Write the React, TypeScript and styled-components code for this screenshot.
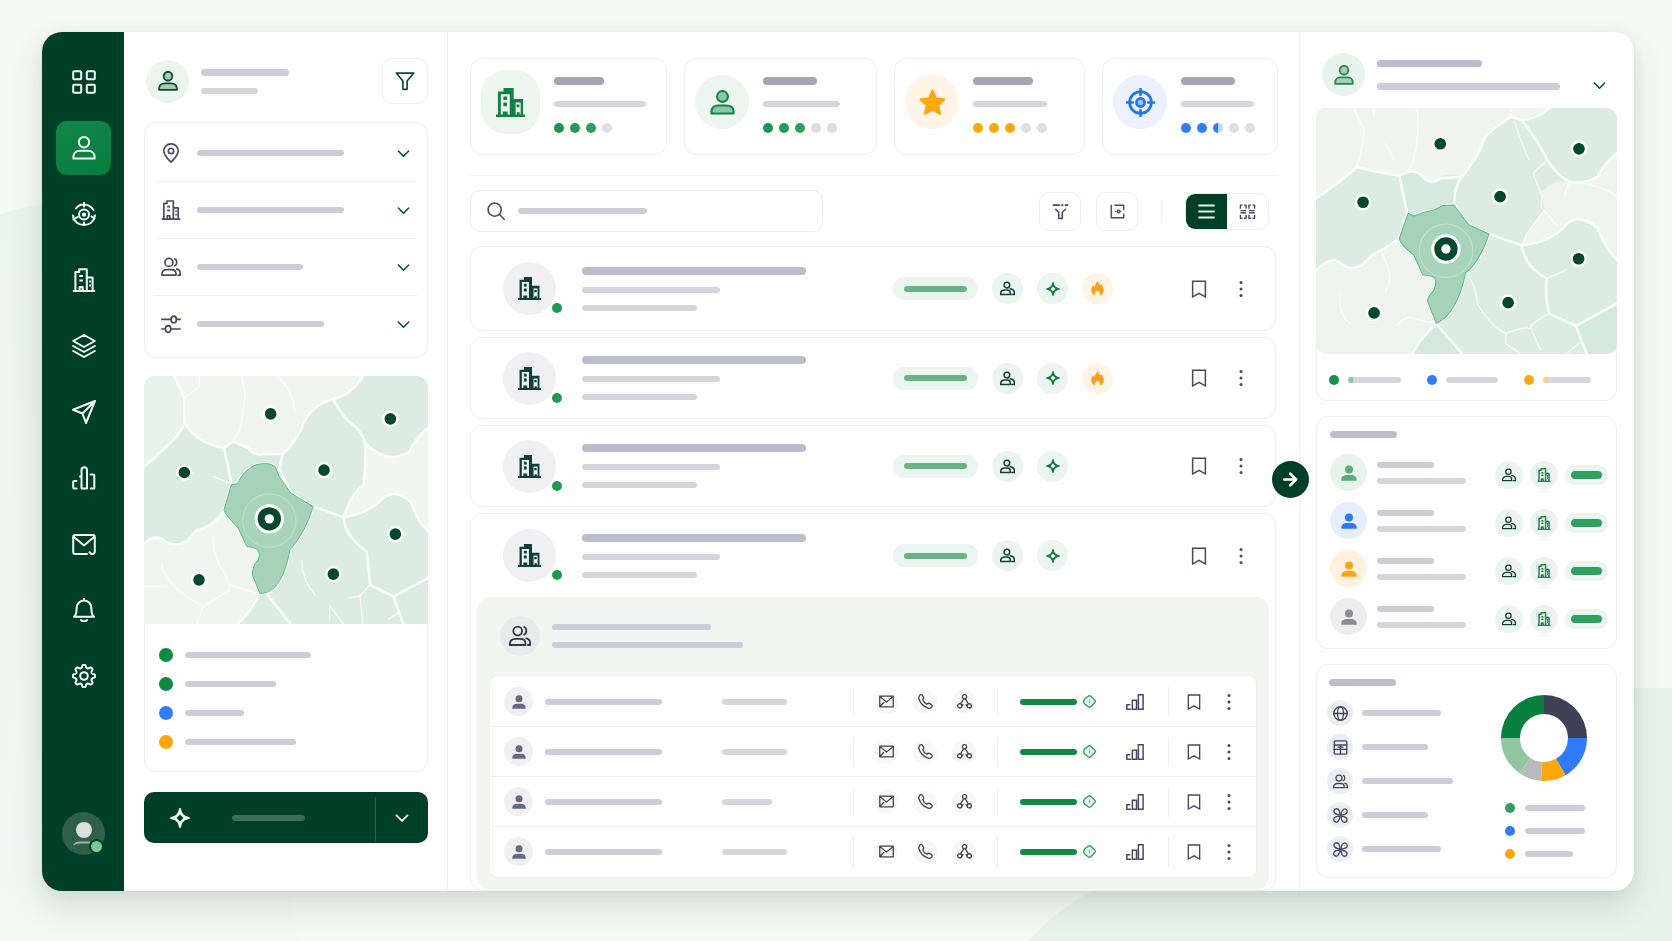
import React from "react";
import styled, { createGlobalStyle, css } from "styled-components";

const c = {
  forest: "#003f27",
  ink: "#0a4a33",
  green: "#0f8a45",
  mid: "#2fa05f",
  mint: "#ecf4ef",
  blue: "#2f7bfb",
  amber: "#fda70f",
  slate: "#4b4762",
  line: "#f0f1f2",
  barStrong: "#a3a4b5",
  barDark: "#bdbccc",
  bar: "#cdcdd9",
  barLight: "#d5d5de",
};

const GlobalStyle = createGlobalStyle`
  *, *::before, *::after { box-sizing: border-box; }
  body { margin: 0; background: #f6f8f6; font-family: Inter, "Liberation Sans", sans-serif; }
  button { appearance: none; border: 0; padding: 0; background: none; color: inherit; font: inherit; cursor: pointer; }
  ul { list-style: none; margin: 0; padding: 0; }
  svg { display: block; flex: none; }
`;

/* ---------- icons ---------- */

type IconProps = { size?: number; weight?: number; tone?: string; className?: string };

const Glyph = ({ size = 24, weight = 2, className, children }: IconProps & { children: React.ReactNode }) => (
  <svg
    className={className}
    width={size}
    height={size}
    viewBox="0 0 24 24"
    fill="none"
    stroke="currentColor"
    strokeWidth={weight}
    strokeLinecap="round"
    strokeLinejoin="round"
    aria-hidden="true"
  >
    {children}
  </svg>
);

const GridIcon = (p: IconProps) => (
  <Glyph {...p}>
    <rect x="1.2" y="1.2" width="8" height="8" rx="1" />
    <rect x="14.8" y="1.2" width="8" height="8" rx="1" />
    <rect x="1.2" y="14.8" width="8" height="8" rx="1" />
    <rect x="14.8" y="14.8" width="8" height="8" rx="1" />
  </Glyph>
);

const UserIcon = ({ tone = "none", ...p }: IconProps) => (
  <Glyph {...p}>
    <circle cx="12" cy="6.2" r="5.2" fill={tone} />
    <path d="M1.4 22.6v-1.8c0-3.6 2.8-6 6.6-6h8c3.8 0 6.6 2.4 6.6 6v1.8z" fill={tone} />
  </Glyph>
);

const SolidUserIcon = ({ size = 16 }: IconProps) => (
  <svg width={size} height={size} viewBox="0 0 24 24" fill="currentColor" aria-hidden="true">
    <circle cx="12" cy="6.6" r="6" />
    <path d="M0.5 23.5v-1.5c0-4.5 3.5-7 8-7h7c4.5 0 8 2.500 8 7v1.5z" />
  </svg>
);

const UsersIcon = (p: IconProps) => (
  <Glyph {...p}>
    <circle cx="9.5" cy="6.5" r="4.8" />
    <path d="M1 21.8v-1.3c0-3.2 2.5-5.300 5.700-5.300h6c3.200 0 5.300 2.100 5.300 5.300v1.300z" />
    <path d="M16.5 2.2c3.200 1.200 3.200 7 0 8.400M18.800 14.600c2.700.5 4.200 2.500 4.200 5v2.200h-2.400" />
  </Glyph>
);

const TeamIcon = (p: IconProps) => (
  <Glyph {...p}>
    <circle cx="11" cy="6.4" r="4.6" />
    <path d="M1 21.5v-1c0-4 3-6.300 7-6.300h3.500c3 0 5 2.300 5 5.300v2z" />
    <path d="M16.5 12.5c3.800.6 6.500 3.300 6.500 6.800v2.200h-4" />
  </Glyph>
);

const BuildingIcon = (p: IconProps) => (
  <Glyph {...p}>
    <path d="M0.8 23h22.400M3.400 23V4h3.800V1.200h7.600V23M14.800 9.500h5.800V23" strokeLinecap="butt" />
    <path d="M7.4 8h3.600M7.400 12.500h3.600M17.200 13.500h1.800M17.200 17.500h1.800" strokeLinecap="butt" />
    <path d="M7.6 22.5v-3.600h3v3.600" />
  </Glyph>
);

const TowerIcon = ({ size = 24 }: IconProps) => (
  <svg width={size} height={size} viewBox="0 0 24 24" fill="currentColor" fillRule="evenodd" aria-hidden="true">
    <path d="M0 24v-2h1.600V2.800h4.600V0h8.400v9h7.800v13H24v2zM4 5.200V22h1.600v-2.600h4V22h1.800V5.200zM16.200 12v10h1v-2h2.400v2h.8V12z" />
    <path d="M6.1 7h3v3h-3zM6.100 12h3v3h-3zM17 13.600h2.400V16H17z" />
  </svg>
);

const RadarIcon = (p: IconProps) => (
  <Glyph {...p}>
    <circle cx="12" cy="12.6" r="5" />
    <circle cx="12" cy="12.6" r="1.2" fill="currentColor" />
    <path d="M4 6.500C6 3.800 9 2.400 12 2.600c4 .1 7 2 9.500 5.400M1 13.500C1.500 19.500 6.500 23 12 23c5.500 0 10-3.500 11-9.500M12 0v4.500M12 20.500V24M1.400 17.500l4.100-2.500M22.500 16.500l-3-2" />
  </Glyph>
);

const LayersIcon = (p: IconProps) => (
  <Glyph {...p}>
    <path d="M12 1 22.800 7 12 13 1.200 7zM1.200 12 12 18l10.800-6M1.200 17 12 23l10.800-6" />
  </Glyph>
);

const SendIcon = (p: IconProps) => (
  <Glyph {...p}>
    <path d="M23 1 14 23l-3.500-9.500L1 9.800zM23 1 10.500 13.500" />
  </Glyph>
);

const ColumnsIcon = (p: IconProps) => (
  <Glyph {...p}>
    <path d="M4.5 15H2.200c-.7 0-1 .4-1 1v5.500c0 .6.400 1 1 1h2.300M8 10.500h1.500M9.500 22.500V4.200c0-4 5.500-4 5.500 0v18.300zM18.500 8.500h2.800c.6 0 1 .4 1 1v13h-3.500" />
  </Glyph>
);

const MailIcon = (p: IconProps) => (
  <Glyph {...p}>
    <path d="M15 22H3.200c-1.200 0-2-.8-2-2V5c0-1.200.8-2 2-2h17.600c1.200 0 2 .8 2 2v14.500c0 1.700-1.800 3-3.800 2.400l-1.500-1.600M2 5l10 8.500L22 5" />
  </Glyph>
);

const EnvelopeIcon = (p: IconProps) => (
  <Glyph {...p}>
    <path d="M1.2 3.500h21.600v17H1.200zM1.500 4l10.500 9L22.500 4M1.500 20l6-6.500" />
  </Glyph>
);

const BellIcon = (p: IconProps) => (
  <Glyph {...p}>
    <path d="M12 .8v1.500M2 18.800c2.200-1.700 2.600-3.800 2.600-8.300 0-4.800 3.100-8 7.400-8s7.400 3.200 7.400 8c0 4.500.4 6.600 2.600 8.300zM9 22c1 1.600 5 1.600 6 0" />
  </Glyph>
);

const gearPath = (() => {
  const pts: string[] = [];
  for (let i = 0; i < 160; i += 1) {
    const a = (i / 160) * Math.PI * 2;
    const wave = Math.tanh(1.8 * Math.cos(8 * a)) / Math.tanh(1.8);
    const r = 9.7 + 1.4 * wave;
    pts.push(`${(12 + r * Math.sin(a)).toFixed(2)} ${(12 - r * Math.cos(a)).toFixed(2)}`);
  }
  return `M${pts.join("L")}Z`;
})();

const GearIcon = (p: IconProps) => (
  <Glyph {...p}>
    <path d={gearPath} />
    <circle cx="12" cy="12" r="3.8" />
  </Glyph>
);

const FunnelIcon = (p: IconProps) => (
  <Glyph {...p}>
    <path d="M1.5 2.500h21l-8 9.500v10h-5V12z" />
  </Glyph>
);

const FunnelLinesIcon = (p: IconProps) => (
  <Glyph {...p}>
    <path d="M1 3h10M13 3h3M18 3h5M4.500 8.500l5 4.500v9h5v-9l5-4.500" strokeLinecap="butt" />
  </Glyph>
);

const ExportIcon = (p: IconProps) => (
  <Glyph {...p}>
    <path d="M2 1v21h20v-7M7 2h15v8M8 12h2M15.500 9.800h-2c-2.500 0-2.500 4.400 0 4.400h2M14 12h4" strokeLinecap="butt" />
  </Glyph>
);

const TilesIcon = (p: IconProps) => (
  <Glyph {...p}>
    <path
      d="M2 8V3h3M7 3h3v5M2 10.800h8M14 8V3h3M19 3h3v5M14 10.800h8M2 13.800h8M14 13.800h8M2 16.500v5h3M7 21.500h3v-5M14 16.500v5h3M19 21.500h3v-5"
      strokeLinecap="butt"
    />
  </Glyph>
);

const ListIcon = (p: IconProps) => (
  <Glyph {...p}>
    <path d="M1.5 3.500h21M1.500 12h21M1.500 20.500h21" />
  </Glyph>
);

const PinIcon = (p: IconProps) => (
  <Glyph {...p}>
    <path d="M12 23c-4.500-4.600-8.600-8.200-8.600-13.400C3.400 4.700 7.200 1 12 1s8.600 3.700 8.600 8.600C20.600 14.800 16.500 18.400 12 23z" />
    <circle cx="12" cy="9.5" r="3.2" />
  </Glyph>
);

const SlidersIcon = (p: IconProps) => (
  <Glyph {...p}>
    <path d="M1 6.500h10.500M18.500 6.500H23M1 18h4M12 18h11" />
    <ellipse cx="15.3" cy="6.5" rx="3.2" ry="4" />
    <ellipse cx="8.5" cy="18" rx="3.2" ry="4" />
  </Glyph>
);

const ChevronIcon = (p: IconProps) => (
  <Glyph {...p}>
    <path d="M2.5 7.500 12 17l9.500-9.500" />
  </Glyph>
);

const SearchIcon = (p: IconProps) => (
  <Glyph {...p}>
    <circle cx="10.2" cy="10.2" r="8.8" />
    <path d="M17 17l6 6" />
  </Glyph>
);

const StarIcon = (p: IconProps) => (
  <Glyph {...p}>
    <path d="M12 1.500l3.200 6.900 7.300.9-5.400 5.100 1.500 7.600L12 18.200l-6.600 3.800 1.500-7.600L1.500 9.300l7.300-.9z" fill="currentColor" />
  </Glyph>
);

const AimIcon = (p: IconProps) => (
  <Glyph {...p}>
    <circle cx="12" cy="12" r="9" />
    <circle cx="12" cy="12" r="3.4" fill="#9dc0fd" />
    <path d="M12 .8v4.800M12 18.400v4.800M.8 12h4.800M18.400 12h4.800" />
  </Glyph>
);

const SparkIcon = ({ size = 16 }: IconProps) => (
  <svg width={size} height={size} viewBox="0 0 24 24" fill="currentColor" fillRule="evenodd" aria-hidden="true">
    <path d="M12 0c.8 0 1.200.5 1.300 1.300.5 2.800 1.400 5 2.900 6.500s3.700 2.400 6.500 2.900c1.700.3 1.700 2.300 0 2.600-2.800.5-5 1.400-6.500 2.900s-2.400 3.700-2.900 6.500c-.3 1.700-2.300 1.700-2.600 0-.5-2.800-1.400-5-2.900-6.500s-3.700-2.400-6.500-2.900c-1.700-.3-1.700-2.300 0-2.600 2.800-.5 5-1.400 6.500-2.900s2.400-3.700 2.900-6.500C10.800.5 11.200 0 12 0zM12 7.800 7.800 12l4.200 4.200 4.200-4.200z" />
  </svg>
);

const FlameIcon = ({ size = 16 }: IconProps) => (
  <svg width={size} height={size} viewBox="0 0 24 24" fill="currentColor" aria-hidden="true">
    <path d="M8.5 23.500C4.500 22 2 18.800 2 14.800c0-3 1.400-5.700 3.500-7.900l2.200 2.600C8.400 6 10 2.500 12.800 0c.6 3 2 4.500 3.400 6.400l1.600-1.200c2.500 2.800 4.200 6 4.200 9.400 0 4.200-2.500 7.500-6.500 8.900.8-2.500.2-5.500-1.500-7.700l-1.500 2.300-1.800-3c-2.500 2.400-3.400 5.600-2.200 8.400z" />
  </svg>
);

const BookmarkIcon = (p: IconProps) => (
  <Glyph {...p}>
    <path d="M3.5 1.500h17v21L12 17.800 3.500 22.500z" strokeLinejoin="miter" />
  </Glyph>
);

const KebabIcon = ({ size = 18 }: IconProps) => (
  <svg width={size} height={size} viewBox="0 0 18 18" fill="currentColor" aria-hidden="true">
    <circle cx="9" cy="2.4" r="1.5" />
    <circle cx="9" cy="9" r="1.5" />
    <circle cx="9" cy="15.6" r="1.5" />
  </svg>
);

const PhoneIcon = (p: IconProps) => (
  <Glyph {...p}>
    <path d="M2 3.500C3.500.8 6 .5 7 2l2 3.600c.6 1.300-.2 2.500-1.400 3.400.9 3.200 3.300 5.900 6.600 7.400 1.300-1.600 2.700-2 4-1.300l3.400 2c1.800 1.200 1.400 3.400-.8 5-1.600 1.200-4 1-6.500-.2C8 19 3.600 14 1.700 8.500 1.200 6.600 1.200 5 2 3.500z" />
  </Glyph>
);

const NetworkIcon = (p: IconProps) => (
  <Glyph {...p}>
    <circle cx="12" cy="4.4" r="3.4" />
    <circle cx="4.4" cy="19" r="3.4" />
    <circle cx="19.6" cy="19" r="3.4" />
    <path d="M10.5 8 6 15.500M13.500 8 18 15.500M8 19l1.500-2M16 19l-1.500-2" />
  </Glyph>
);

const SignalIcon = (p: IconProps) => (
  <Glyph {...p}>
    <path d="M5 15.500H1.200v6H6M8.500 21.500V9.500h5.500v12zM16.500 4.500V2.200h6.300v19.300h-6.300V6" strokeLinejoin="miter" />
  </Glyph>
);

const GemIcon = (p: IconProps) => (
  <Glyph {...p}>
    <path d="M9.5 2.200 3 7.500c-2 2.500-2 6.500 0 9l6.500 5.300c1.500 1 3.500 1 5 0l7.500-8c1-1.200 1-2.600 0-3.800l-7.500-7.800c-1.500-1-3.500-1-5 0z" fill="#e4f4ea" />
    <path d="M12 9.500v5" strokeWidth="2" opacity="0.6" />
  </Glyph>
);

const ArrowIcon = (p: IconProps) => (
  <Glyph {...p}>
    <path d="M2 12h18M11.500 2.500l9.500 9.500-9.500 9.500" />
  </Glyph>
);

const GlobeIcon = (p: IconProps) => (
  <Glyph {...p}>
    <circle cx="12" cy="12" r="10.8" />
    <ellipse cx="12" cy="12" rx="4.8" ry="10.8" />
    <path d="M1.2 12h21.600" />
  </Glyph>
);

const SheetIcon = (p: IconProps) => (
  <Glyph {...p}>
    <rect x="2" y="1.5" width="20" height="21" rx="1.5" />
    <path d="M2 8h20M2 15h20M12 8v14.500M8 11.500h8" />
  </Glyph>
);

const CloverIcon = (p: IconProps) => (
  <Glyph {...p}>
    {[0, 90, 180, 270].map((turn) => (
      <path
        key={turn}
        d="M11 11.500C11.300 6 9.500 1.200 5.800 1.200 1.500 1.200 0 6 3.500 8.600c2 1.500 4 2.200 7.500 2.900z"
        transform={`rotate(${turn} 12 12)`}
      />
    ))}
  </Glyph>
);

/* ---------- shared parts ---------- */

const Bar = styled.span<{ $w: number; $h?: number; $tone?: string }>`
  display: block;
  flex: none;
  width: ${(p) => p.$w}px;
  max-width: 100%;
  height: ${(p) => p.$h ?? 6}px;
  border-radius: 4px;
  background: ${(p) => p.$tone ?? c.bar};
`;

const Dot = styled.span<{ $size?: number; $tone: string }>`
  display: block;
  flex: none;
  width: ${(p) => p.$size ?? 10}px;
  height: ${(p) => p.$size ?? 10}px;
  border-radius: 50%;
  background: ${(p) => p.$tone};
`;

const Disc = styled.span<{ $size: number; $bg?: string; $fg?: string }>`
  position: relative;
  display: grid;
  place-items: center;
  flex: none;
  width: ${(p) => p.$size}px;
  height: ${(p) => p.$size}px;
  border-radius: 50%;
  background: ${(p) => p.$bg ?? c.mint};
  color: ${(p) => p.$fg ?? c.ink};
`;

const Lines = styled.span<{ $gap: number }>`
  display: flex;
  flex-direction: column;
  gap: ${(p) => p.$gap}px;
  min-width: 0;
`;

const Card = styled.section`
  border: 1px solid ${c.line};
  border-radius: 12px;
  background: #fefefe;
`;

/* ---------- page frame ---------- */

const Page = styled.div`
  position: relative;
  min-height: 100vh;
  padding: 32px 38px 50px 42px;
`;

const Backdrop = styled.svg`
  position: absolute;
  inset: 0;
  width: 100%;
  height: 100%;
`;

const Window = styled.div`
  position: relative;
  display: grid;
  grid-template-columns: 82px 324px minmax(0, 1fr) 334px;
  min-height: calc(100vh - 82px);
  border-radius: 20px;
  background: #fefefe;
  box-shadow: 0 14px 32px rgba(20, 60, 40, 0.14), 0 2px 12px rgba(20, 60, 40, 0.05);
`;

/* ---------- sidebar ---------- */

const Rail = styled.nav`
  display: flex;
  flex-direction: column;
  align-items: center;
  padding: 23px 0 36px 1px;
  border-radius: 20px 0 0 20px;
  background: ${c.forest};
  color: #f2fbf5;
`;

const RailList = styled.ul`
  display: flex;
  flex-direction: column;
  gap: 12px;
`;

const RailButton = styled.button<{ $active?: boolean }>`
  display: grid;
  place-items: center;
  width: 55px;
  height: 54px;
  border-radius: 11px;
  ${(p) =>
    p.$active &&
    css`
      background: linear-gradient(160deg, #108546, #0a7d40);
    `}
`;

const Profile = styled.button`
  position: relative;
  display: grid;
  place-items: center;
  width: 43px;
  height: 43px;
  margin-top: auto;
  border-radius: 50%;
  background: #2f6049;
`;

const Presence = styled.span`
  position: absolute;
  right: 1px;
  bottom: 1px;
  width: 15px;
  height: 15px;
  border: 2px solid ${c.forest};
  border-radius: 50%;
  background: #76cb93;
`;

const ProfileArt = () => (
  <svg width="24" height="24" viewBox="0 0 24 24" aria-hidden="true">
    <circle cx="12" cy="8" r="8" fill="#dcdfdd" />
    <path d="M1 23.500C2 20 6 19.500 9 19.500h9v2H9c-3 0-5 .5-8 2z" fill="#9db5a8" />
  </svg>
);

const railItems = [
  { label: "Dashboard", icon: GridIcon },
  { label: "Contacts", icon: UserIcon },
  { label: "Tracking", icon: RadarIcon },
  { label: "Companies", icon: BuildingIcon },
  { label: "Segments", icon: LayersIcon },
  { label: "Campaigns", icon: SendIcon },
  { label: "Reports", icon: ColumnsIcon },
  { label: "Mail", icon: MailIcon },
  { label: "Notifications", icon: BellIcon },
  { label: "Settings", icon: GearIcon },
];

const Sidebar = () => (
  <Rail aria-label="Main">
    <RailList>
      {railItems.map(({ label, icon: Icon }, i) => (
        <li key={label}>
          <RailButton type="button" aria-label={label} $active={i === 1}>
            <Icon size={24} weight={2} />
          </RailButton>
        </li>
      ))}
    </RailList>
    <Profile type="button" aria-label="Profile">
      <ProfileArt />
      <Presence />
    </Profile>
  </Rail>
);

/* ---------- maps ---------- */

type MapData = {
  viewBox: string;
  base: string;
  fills: { d: string; tone: string }[];
  roads: string[];
  lanes: string[];
  focus: string;
  centre: [number, number];
  pins: [number, number][];
};

const MapArt = styled.svg<{ $h: number; $flat?: boolean }>`
  width: 100%;
  height: ${(p) => p.$h}px;
  border-radius: ${(p) => (p.$flat ? "12px 12px 0 0" : "10px")};
`;

const TerritoryMap = ({ data, height, flat }: { data: MapData; height: number; flat?: boolean }) => (
  <MapArt
    $h={height}
    $flat={flat}
    viewBox={data.viewBox}
    preserveAspectRatio="xMidYMid slice"
    role="img"
    aria-label="Territory map"
  >
    <rect x="0" y="0" width="1400" height="1100" fill={data.base} />
    {data.fills.map((f) => (
      <path key={f.d} d={f.d} fill={f.tone} />
    ))}
    <g fill="none" stroke="#fdfefd" strokeLinecap="round" strokeLinejoin="round">
      {data.lanes.map((d) => (
        <path key={d} d={d} strokeWidth="4" opacity="0.75" />
      ))}
      {data.roads.map((d) => (
        <path key={d} d={d} strokeWidth="7" />
      ))}
    </g>
    <path d={data.focus} fill="#a6d3b8" stroke="#fdfefd" strokeWidth="8" strokeLinejoin="round" />
    <path d={data.focus} fill="#a6d3b8" stroke="#5cb98a" strokeWidth="3" strokeLinejoin="round" />
    <circle cx={data.centre[0]} cy={data.centre[1] + 5} r="80" fill="#b7dcc6" fillOpacity="0.15" stroke="#c4e2d0" strokeWidth="3" />
    <circle cx={data.centre[0]} cy={data.centre[1]} r="44" fill="#fff" />
    <circle cx={data.centre[0]} cy={data.centre[1]} r="35" fill="#04482e" />
    <circle cx={data.centre[0]} cy={data.centre[1]} r="14" fill="#fff" />
    {data.pins.map(([x, y]) => (
      <circle key={`${x}-${y}`} cx={x} cy={y} r="21" fill="#04482e" stroke="#fff" strokeWidth="7" />
    ))}
  </MapArt>
);

const overviewMap: MapData = {
  viewBox: "432 48 852 745",
  base: "#dcece3",
  fills: [
    { d: "M432 48H523L553 115V190Q540 220 522 238Q470 290 432 320Z", tone: "#e8f2ec" },
    { d: "M523 48L553 115V190Q590 250 672 265L700 245L745 265Q765 290 790 283L848 283Q885 250 905 205Q930 135 1000 118Q1050 108 1090 48Z", tone: "#f0f5f2" },
    { d: "M1095 250Q1140 292 1180 292L1225 280Q1250 230 1284 205V515Q1255 470 1235 430Q1190 385 1150 415Q1110 455 1030 472L1050 425Q1085 385 1090 370Z", tone: "#f1f6f3" },
    { d: "M432 550Q470 520 490 540Q520 565 560 545L585 515Q640 500 672 460L715 500L740 560L778 568L775 600L755 625L780 702Q740 760 712 793H432Z", tone: "#f0f5f2" },
    { d: "M672 265L700 245L745 265Q765 290 790 283H848L835 325L765 315L694 372Z", tone: "#d9ebe1" },
  ],
  roads: [
    "M523 48L553 115V190Q540 220 522 238Q470 290 432 320",
    "M553 190Q590 250 672 265Q685 320 694 372L672 455Q640 500 585 515L560 545Q520 565 490 540Q465 522 432 550",
    "M672 265L700 245L745 265Q765 290 790 283H848Q885 250 905 205Q930 135 1000 118Q1050 108 1090 48",
    "M1000 118Q1025 170 1065 200Q1090 225 1095 250Q1140 292 1180 292L1225 280Q1250 230 1284 205",
    "M1095 250Q1100 290 1090 375Q1060 400 1050 425L1030 472Q1100 465 1150 415Q1190 385 1235 430Q1250 480 1284 515",
    "M848 283L838 325L872 400L940 440L1030 472Q1035 530 1100 575L1110 675L1180 710L1284 655",
    "M1180 710L1210 793M780 702Q745 765 712 793M800 702L830 740L872 793",
    "M940 440Q915 520 870 570Q850 680 800 702",
  ],
  lanes: [
    "M553 115L598 80V48M725 48L735 100Q730 200 700 245M830 48Q880 90 885 160",
    "M1110 675L1080 708L1088 793M1080 708L1045 715M905 600Q905 660 945 705M990 738L1030 793M1165 778L1195 760",
    "M640 350L694 372M640 530Q635 590 680 650L690 690L610 740L590 793M485 610Q490 660 560 710L610 740M432 680L500 680",
    "M690 675L770 700M990 738L988 780",
  ],
  focus: "M712 372Q735 325 768 315Q805 305 825 320L838 350L872 400L940 440Q915 520 870 570Q850 680 800 698L780 702L757 645Q757 615 775 600Q785 570 760 563L740 560L715 505Q675 465 672 450L694 375Z",
  centre: [808, 477],
  pins: [[812, 162], [1171, 177], [553, 338], [972, 331], [1186, 523], [1000, 643], [597, 660]],
};

const accountMap: MapData = {
  viewBox: "77 235 901 736",
  base: "#dcece3",
  fills: [
    { d: "M77 235H775Q740 270 660 262Q600 300 582 325Q550 390 515 440Q470 420 420 458Q390 425 330 438L198 412Q120 480 77 505Z", tone: "#f0f5f2" },
    { d: "M835 455Q880 465 920 440Q940 400 978 370V690Q940 650 920 595Q870 550 830 580Q780 640 692 645L708 610L760 540L755 485Q780 450 835 455Z", tone: "#f0f4f1" },
    { d: "M77 720Q120 680 145 695Q175 725 215 705Q250 665 270 662L325 625L370 675L397 735L437 742V770L412 805L437 880Q385 930 365 971H77Z", tone: "#edf3ef" },
    { d: "M327 438Q365 415 390 433Q415 470 450 445Q475 445 515 440Q490 465 492 525L370 553L350 550Z", tone: "#d6e9df" },
    { d: "M855 887L978 820V971H887Z", tone: "#d5e8de" },
    { d: "M437 880L515 971H365Q385 930 437 880Z", tone: "#d5e8de" },
  ],
  roads: [
    "M77 505Q160 450 198 412Q250 425 327 438L350 550L327 625Q290 650 270 662Q245 670 215 705Q175 725 145 695Q120 680 77 720",
    "M327 438Q365 415 390 433Q415 470 450 445Q475 445 515 440Q560 385 582 325Q600 300 660 262L690 270Q740 270 775 235",
    "M515 440Q488 470 492 525L535 585L595 612L692 645Q780 640 830 580Q870 550 920 595Q940 650 978 690",
    "M690 270Q720 300 770 390Q800 440 835 455Q880 465 920 440Q940 400 978 370",
    "M692 645Q705 715 768 745Q760 790 775 850L855 887L978 820M855 887L887 971",
    "M595 612Q565 700 525 728Q500 850 437 880Q385 930 365 971M437 880L515 971",
  ],
  lanes: [
    "M380 235Q390 350 355 425M190 235L220 300Q215 370 198 412M250 235V262M285 340L310 390M660 240V262",
    "M672 275Q690 340 715 390M770 390L727 430Q745 480 755 500L750 530L800 590M760 540L708 610L697 640M835 455L822 495M840 455Q930 465 978 500",
    "M535 740Q560 780 560 820Q600 890 645 910V940L690 971M645 910Q690 890 720 895Q715 880 775 850M720 895L750 960M825 971L870 935M770 745L825 720",
    "M270 662Q305 720 295 760L285 785M320 885Q350 850 380 868L437 880M150 790Q140 850 180 880",
  ],
  focus: "M353 550L370 558Q400 545 430 540L455 527L490 525L535 585L595 612Q565 700 525 728Q500 850 437 880L411 812Q411 800 430 780Q445 742 420 738L397 735L370 675Q335 650 326 627Z",
  centre: [466, 657],
  pins: [[449, 342], [864, 357], [218, 517], [628, 500], [863, 686], [652, 817], [251, 848]],
};

/* ---------- left panel ---------- */

const FilterPanel = styled.aside`
  display: flex;
  flex-direction: column;
  gap: 18px;
  padding: 26px 19px 48px 20px;
  border-right: 1px solid ${c.line};
`;

const PanelHead = styled.header`
  display: flex;
  align-items: center;
  gap: 12px;
  height: 46px;
  padding-left: 2px;
`;

const SquareButton = styled.button<{ $w: number; $h: number }>`
  display: grid;
  place-items: center;
  flex: none;
  width: ${(p) => p.$w}px;
  height: ${(p) => p.$h}px;
  border: 1px solid #efeff1;
  border-radius: 10px;
  color: ${c.slate};
`;

const HeadFilter = styled(SquareButton)`
  margin-left: auto;
  color: ${c.ink};
`;

const FilterCard = styled(Card)`
  padding: 2px 10px 4px;
`;

const FilterRow = styled.li`
  border-bottom: 1px solid ${c.line};
  &:last-child {
    border-bottom-color: transparent;
  }
`;

const FilterButton = styled.button`
  display: flex;
  align-items: center;
  gap: 16px;
  width: 100%;
  height: 56px;
  padding: 0 7px 0 6px;
  color: ${c.slate};
`;

const TrailingChevron = styled(ChevronIcon)`
  margin-left: auto;
  color: ${c.ink};
`;

const MapCard = styled.section`
  border-radius: 12px;
  box-shadow: inset 0 0 0 1px ${c.line};
`;

const MapLegend = styled.ul`
  display: flex;
  flex-direction: column;
  gap: 15px;
  padding: 24px 15px 23px;
`;

const LegendItem = styled.li<{ $gap: number }>`
  display: flex;
  align-items: center;
  gap: ${(p) => p.$gap}px;
`;

const SplitButton = styled.div`
  display: flex;
  height: 51px;
  margin-top: auto;
  padding: 5px 0 2px;
  border-radius: 10px;
  background: ${c.forest};
  color: #f4fbf6;
`;

const SplitMain = styled.button`
  display: flex;
  align-items: center;
  gap: 42px;
  flex: 1;
  padding: 0 0 3px 26px;
`;

const SplitMore = styled.button`
  display: grid;
  place-items: center;
  width: 53px;
  padding-bottom: 3px;
  border-left: 1px solid #2f614b;
`;

const filters = [
  { label: "Location", icon: PinIcon, w: 147 },
  { label: "Company", icon: BuildingIcon, w: 147 },
  { label: "Team", icon: UsersIcon, w: 106 },
  { label: "Attributes", icon: SlidersIcon, w: 127 },
];

const LeftPanel = () => (
  <FilterPanel aria-label="Filters">
    <PanelHead>
      <Disc $size={43}>
        <UserIcon size={20} weight={2.2} tone="#a3ccb6" />
      </Disc>
      <Lines $gap={12}>
        <Bar $w={88} $h={7} />
        <Bar $w={57} $tone={c.barLight} />
      </Lines>
      <HeadFilter type="button" aria-label="Filter" $w={46} $h={46}>
        <FunnelIcon size={20} weight={2} />
      </HeadFilter>
    </PanelHead>
    <FilterCard>
      <ul>
        {filters.map(({ label, icon: Icon, w }) => (
          <FilterRow key={label}>
            <FilterButton type="button" aria-label={label} aria-expanded={false}>
              <Icon size={20} weight={2} />
              <Bar $w={w} />
              <TrailingChevron size={13} weight={2.8} />
            </FilterButton>
          </FilterRow>
        ))}
      </ul>
    </FilterCard>
    <MapCard>
      <TerritoryMap data={overviewMap} height={248} flat />
      <MapLegend>
        {[
          [c.green, 126],
          [c.green, 91],
          [c.blue, 59],
          [c.amber, 111],
        ].map(([tone, w]) => (
          <LegendItem key={`${tone}-${w}`} $gap={12}>
            <Dot $size={14} $tone={String(tone)} />
            <Bar $w={Number(w)} />
          </LegendItem>
        ))}
      </MapLegend>
    </MapCard>
    <SplitButton>
      <SplitMain type="button" aria-label="Create">
        <SparkIcon size={20} />
        <Bar $w={73} $tone="#3b6f56" />
      </SplitMain>
      <SplitMore type="button" aria-label="More create options">
        <ChevronIcon size={14} weight={3} />
      </SplitMore>
    </SplitButton>
  </FilterPanel>
);

/* ---------- centre ---------- */

const Main = styled.main`
  min-width: 0;
  padding: 26px 21px 0 22px;
  border-right: 1px solid ${c.line};
`;

const Stats = styled.div`
  display: grid;
  grid-template-columns: 197fr 193fr 191fr 176fr;
  gap: 17px;
  padding-bottom: 20px;
  border-bottom: 1px solid #f3f4f4;
`;

const StatCard = styled(Card)`
  display: flex;
  align-items: center;
  gap: 14px;
  height: 97px;
  padding: 0 0 9px 10px;
`;

const StatBadge = styled(Disc)<{ $wide?: boolean }>`
  ${(p) =>
    p.$wide &&
    css`
      width: 59px;
      height: 64px;
      border-radius: 25px;
    `}
`;

const StatText = styled.div`
  display: flex;
  flex-direction: column;
  gap: 16px;
  padding-top: 5px;
`;

const Rating = styled.div`
  display: flex;
  gap: 6px;
`;

const off = "#dfdfe1";
const stats = [
  { icon: <TowerIcon size={29} />, bg: "#edf5f0", fg: "#128044", wide: true, top: 50, sub: 92, dots: ["#1b9450", "#239a56", "#309d60", off] },
  { icon: <UserIcon size={25} weight={2} tone="#8cc7a3" />, bg: "#edf5f0", fg: "#158347", top: 54, sub: 77, dots: ["#1b9450", "#239a56", "#309d60", off, off] },
  { icon: <StarIcon size={27} />, bg: "#fff4e5", fg: c.amber, top: 60, sub: 74, dots: [c.amber, c.amber, c.amber, off, off] },
  {
    icon: <AimIcon size={29} weight={2.2} />,
    bg: "#ebf1fe",
    fg: "#2273f0",
    top: 54,
    sub: 73,
    dots: [c.blue, c.blue, `linear-gradient(90deg, ${c.blue} 50%, #bfd5fb 50%)`, off, off],
  },
];

const Toolbar = styled.div`
  display: flex;
  align-items: center;
  height: 42px;
  margin: 14px 0;
  padding-right: 9px;
`;

const SearchField = styled.label`
  display: flex;
  align-items: center;
  gap: 13px;
  flex: 0 1 353px;
  min-width: 0;
  height: 42px;
  padding: 0 16px;
  border: 1px solid #ebecee;
  border-radius: 10px;
  color: #4a4a50;
`;

const SearchInput = styled.input`
  flex: 1;
  min-width: 0;
  border: 0;
  outline: 0;
  background: none;
  font: 14px/20px Inter, "Liberation Sans", sans-serif;
`;

const Tools = styled.div`
  display: flex;
  align-items: center;
  gap: 15px;
  margin-left: auto;
`;

const Separator = styled.span`
  display: block;
  flex: none;
  width: 1px;
  height: 22px;
  margin: 0 8px;
  background: #ecedef;
`;

const ViewToggle = styled.div`
  display: flex;
  height: 37px;
  border: 1px solid #efeff1;
  border-radius: 10px;
  overflow: hidden;
`;

const ToggleSide = styled.button<{ $active?: boolean }>`
  display: grid;
  place-items: center;
  width: 41px;
  color: ${(p) => (p.$active ? "#e8f6ee" : c.slate)};
  background: ${(p) => (p.$active ? c.forest : "transparent")};
`;

const Results = styled.div`
  display: flex;
  flex-direction: column;
  gap: 6px;
  padding-right: 2px;
`;

const Result = styled.article`
  border: 1px solid #eeefef;
  border-radius: 12px;
`;

const ResultRow = styled.div<{ $h: number }>`
  display: grid;
  grid-template-columns: 53px minmax(0, 1fr) 271px auto;
  column-gap: 26px;
  align-items: center;
  height: ${(p) => p.$h}px;
  padding: 0 25px 0 32px;
`;

const StatusDot = styled(Dot)`
  position: absolute;
  right: -6px;
  bottom: 2px;
`;

const Chips = styled.div`
  display: flex;
  align-items: center;
  gap: 14px;
`;

const Tag = styled.span<{ $w: number; $h: number }>`
  display: grid;
  place-items: center;
  flex: none;
  width: ${(p) => p.$w}px;
  height: ${(p) => p.$h}px;
  border-radius: 12px;
  background: ${c.mint};
`;

const Actions = styled.div`
  display: flex;
  align-items: center;
  gap: 24px;
  color: ${c.slate};
`;

const IconButton = styled.button`
  display: grid;
  place-items: center;
`;

const Expanded = styled.div`
  margin: 0 6px;
  padding: 19px 12px 12px;
  border-radius: 14px;
  background: #f1f6f3;
`;

const ExpandedHead = styled.header`
  display: flex;
  align-items: center;
  gap: 12px;
  padding: 0 11px 19px;
`;

const TableFrame = styled.div`
  padding-top: 1px;
  border: 1px solid #eef1f0;
  border-radius: 9px;
  background: #fefefe;
`;

const People = styled.table`
  width: 100%;
  table-layout: fixed;
  border-spacing: 0;

  td {
    height: 50px;
    padding: 0;
    border-bottom: 1px solid #f0f1f2;
  }
  tr:last-child td {
    border-bottom-color: transparent;
  }
`;

const Cell = styled.div<{ $gap: number; $pad: number; $ruled?: boolean }>`
  display: flex;
  align-items: center;
  gap: ${(p) => p.$gap}px;
  height: 30px;
  padding-left: ${(p) => p.$pad}px;
  color: ${c.slate};
  ${(p) =>
    p.$ruled &&
    css`
      border-left: 1px solid #f0f0f2;
    `}
`;

const Gem = styled.span`
  color: #2c9f5c;
  margin-right: 24px;
`;

const Company = ({ hot, tall, children }: { hot?: boolean; tall?: boolean; children?: React.ReactNode }) => (
  <Result>
    <ResultRow $h={tall ? 83 : 80}>
      <Disc $size={53} $bg="#f0f0f2" $fg="#0c3f3b">
        <TowerIcon size={23} />
        <StatusDot $tone="#1f9a53" />
      </Disc>
      <Lines $gap={12}>
        <Bar $w={224} $h={8} $tone={c.barDark} />
        <Bar $w={138} $tone={c.barLight} />
        <Bar $w={115} $tone={c.barLight} />
      </Lines>
      <Chips>
        <Tag $w={85} $h={23}>
          <Bar $w={63} $tone="#69b387" />
        </Tag>
        <Disc $size={31} $fg="#123c38">
          <TeamIcon size={15} weight={2.4} />
        </Disc>
        <Disc $size={31} $fg="#12793f">
          <SparkIcon size={14} />
        </Disc>
        {hot && (
          <Disc $size={31} $bg="#fff4e5" $fg="#fb9f1c">
            <FlameIcon size={15} />
          </Disc>
        )}
      </Chips>
      <Actions>
        <IconButton type="button" aria-label="Bookmark company">
          <BookmarkIcon size={18} weight={2} />
        </IconButton>
        <IconButton type="button" aria-label="Company menu">
          <KebabIcon size={18} />
        </IconButton>
      </Actions>
    </ResultRow>
    {children}
  </Result>
);

const Centre = () => (
  <Main>
    <Stats>
      {stats.map((s, i) => (
        <StatCard key={i}>
          <StatBadge $size={54} $bg={s.bg} $fg={s.fg} $wide={s.wide}>
            {s.icon}
          </StatBadge>
          <StatText>
            <Bar $w={s.top} $h={8} $tone={c.barStrong} />
            <Bar $w={s.sub} $tone={c.barLight} />
            <Rating>
              {s.dots.map((tone, k) => (
                <Dot key={k} $tone={tone} />
              ))}
            </Rating>
          </StatText>
        </StatCard>
      ))}
    </Stats>
    <Toolbar>
      <SearchField>
        <SearchIcon size={18} weight={2} />
        <Bar $w={129} />
        <SearchInput type="search" aria-label="Search companies" />
      </SearchField>
      <Tools>
        <SquareButton type="button" aria-label="Filter results" $w={42} $h={39}>
          <FunnelLinesIcon size={17} weight={2.2} />
        </SquareButton>
        <SquareButton type="button" aria-label="Export results" $w={42} $h={39}>
          <ExportIcon size={15} weight={2.2} />
        </SquareButton>
        <Separator />
        <ViewToggle>
          <ToggleSide type="button" aria-label="List view" aria-pressed $active>
            <ListIcon size={17} weight={2.6} />
          </ToggleSide>
          <ToggleSide type="button" aria-label="Grid view" aria-pressed={false}>
            <TilesIcon size={17} weight={2} />
          </ToggleSide>
        </ViewToggle>
      </Tools>
    </Toolbar>
    <Results>
      <Company hot tall />
      <Company hot />
      <Company />
      <Company tall>
        <Expanded>
          <ExpandedHead>
            <Disc $size={40} $bg="#e8ebeb" $fg="#353645">
              <UsersIcon size={22} weight={2} />
            </Disc>
            <Lines $gap={12}>
              <Bar $w={159} />
              <Bar $w={191} />
            </Lines>
          </ExpandedHead>
          <TableFrame>
            <People aria-label="People">
              <colgroup>
                <col />
                <col width="131" />
                <col width="144" />
                <col width="171" />
                <col width="88" />
              </colgroup>
              <tbody>
                {[65, 65, 50, 65].map((w, i) => (
                  <tr key={i}>
                    <td>
                      <Cell $gap={12} $pad={14}>
                        <Disc $size={29} $bg="#f0f0f2" $fg="#666880">
                          <SolidUserIcon size={14} />
                        </Disc>
                        <Bar $w={117} />
                      </Cell>
                    </td>
                    <td>
                      <Cell $gap={0} $pad={0}>
                        <Bar $w={w} $tone={c.barLight} />
                      </Cell>
                    </td>
                    <td>
                      <Cell $gap={15} $pad={20} $ruled>
                        {[EnvelopeIcon, PhoneIcon, NetworkIcon].map((Icon, k) => (
                          <IconButton key={k} type="button" aria-label={["Email", "Call", "Relations"][k]}>
                            <Disc $size={24} $bg="#f8f8f9" $fg="#44434f">
                              <Icon size={15} weight={2.1} />
                            </Disc>
                          </IconButton>
                        ))}
                      </Cell>
                    </td>
                    <td>
                      <Cell $gap={6} $pad={22} $ruled>
                        <Bar $w={57} $tone={c.green} />
                        <Gem>
                          <GemIcon size={13} weight={2.4} />
                        </Gem>
                        <SignalIcon size={18} weight={2} />
                      </Cell>
                    </td>
                    <td>
                      <Cell $gap={18} $pad={17} $ruled>
                        <IconButton type="button" aria-label="Bookmark person">
                          <BookmarkIcon size={16} weight={2} />
                        </IconButton>
                        <IconButton type="button" aria-label="Person menu">
                          <KebabIcon size={18} />
                        </IconButton>
                      </Cell>
                    </td>
                  </tr>
                ))}
              </tbody>
            </People>
          </TableFrame>
        </Expanded>
      </Company>
    </Results>
  </Main>
);

/* ---------- right panel ---------- */

const DetailPanel = styled.aside`
  position: relative;
  display: flex;
  flex-direction: column;
  gap: 15px;
  padding: 21px 17px 13px 16px;
`;

const Collapse = styled.button`
  position: absolute;
  top: 429px;
  left: -28px;
  display: grid;
  place-items: center;
  width: 37px;
  height: 37px;
  border-radius: 50%;
  background: ${c.forest};
  color: #fff;
`;

const AccountBlock = styled.section`
  display: flex;
  flex-direction: column;
  gap: 12px;
`;

const AccountHead = styled.header`
  display: flex;
  align-items: center;
  gap: 12px;
  height: 43px;
  padding: 0 11px 0 6px;
`;

const AccountMore = styled.button`
  align-self: flex-end;
  margin: 0 0 4px auto;
  color: ${c.ink};
`;

const MapKey = styled.ul`
  display: grid;
  grid-template-columns: 98px 97px 1fr;
  align-items: center;
  height: 47px;
  padding: 4px 0 0 13px;
`;

const PeopleCard = styled(Card)`
  padding: 14px 8px 13px 13px;
`;

const Owners = styled.ul`
  display: flex;
  flex-direction: column;
  gap: 11px;
  padding-top: 16px;
`;

const Owner = styled.li`
  display: flex;
  align-items: center;
  gap: 10px;
  height: 37px;
`;

const OwnerMeta = styled.div`
  display: flex;
  align-items: center;
  gap: 7px;
  margin-left: auto;
  padding-top: 4px;
`;

const SourceCard = styled(Card)`
  display: flex;
  justify-content: space-between;
  flex: 1;
  padding: 14px 29px 12px 10px;
`;

const SourceList = styled.ul`
  display: flex;
  flex-direction: column;
  gap: 8px;
  padding-top: 14px;
`;

const TitleBar = styled(Bar)`
  margin-left: 2px;
`;

const ChartSide = styled.div`
  display: flex;
  flex-direction: column;
  align-items: center;
  gap: 22px;
  padding-top: 16px;
`;

const ChartKey = styled.ul`
  display: flex;
  flex-direction: column;
  gap: 13px;
  width: 78px;
`;

const segments = [
  { from: 0, to: 90, tone: "#3e4256" },
  { from: 90, to: 150, tone: "#2f7bfb" },
  { from: 150, to: 184, tone: "#fda70f" },
  { from: 184, to: 215, tone: "#b9bbba" },
  { from: 215, to: 270, tone: "#92c5a1" },
  { from: 270, to: 360, tone: "#08803d" },
];

const arc = (from: number, to: number) => {
  const at = (deg: number, r: number) => {
    const a = (deg * Math.PI) / 180;
    return `${(43 + r * Math.sin(a)).toFixed(2)} ${(43 - r * Math.cos(a)).toFixed(2)}`;
  };
  return `M${at(from, 43)}A43 43 0 0 1 ${at(to, 43)}L${at(to, 24)}A24 24 0 0 0 ${at(from, 24)}Z`;
};

const Donut = () => (
  <svg width="86" height="86" viewBox="0 0 86 86" role="img" aria-label="Source breakdown">
    {segments.map((s) => (
      <path key={s.from} d={arc(s.from, s.to)} fill={s.tone} />
    ))}
  </svg>
);

const owners = [
  { bg: "#e8f3ec", fg: "#55ad7c" },
  { bg: "#e6edfe", fg: "#2b78f8" },
  { bg: "#fff1de", fg: "#fda412" },
  { bg: "#ededf0", fg: "#8b8b99" },
];

const sources = [
  { icon: GlobeIcon, w: 79 },
  { icon: SheetIcon, w: 66 },
  { icon: UsersIcon, w: 91 },
  { icon: CloverIcon, w: 66 },
  { icon: CloverIcon, w: 79 },
];

const RightPanel = () => (
  <DetailPanel aria-label="Account details">
    <AccountBlock>
      <AccountHead>
        <Disc $size={43} $bg="#e8f3ed" $fg="#27895a">
          <UserIcon size={20} weight={2.2} tone="#a0d2b3" />
        </Disc>
        <Lines $gap={16}>
          <Bar $w={105} $h={7} $tone={c.barDark} />
          <Bar $w={183} $h={7} />
        </Lines>
        <AccountMore type="button" aria-label="Switch account">
          <ChevronIcon size={13} weight={2.8} />
        </AccountMore>
      </AccountHead>
      <MapCard>
        <TerritoryMap data={accountMap} height={246} />
        <MapKey>
          <LegendItem $gap={9}>
            <Dot $tone="#1d8c4b" />
            <Bar $w={53} $tone={`linear-gradient(90deg, #8cc7a3 5px, ${c.barLight} 5px)`} />
          </LegendItem>
          <LegendItem $gap={9}>
            <Dot $tone={c.blue} />
            <Bar $w={52} $tone={c.barLight} />
          </LegendItem>
          <LegendItem $gap={9}>
            <Dot $tone={c.amber} />
            <Bar $w={48} $tone={`linear-gradient(90deg, #fdcf85 5px, ${c.barLight} 5px)`} />
          </LegendItem>
        </MapKey>
      </MapCard>
    </AccountBlock>
    <PeopleCard>
      <Bar $w={67} $h={7} $tone={c.barDark} />
      <Owners>
        {owners.map((o) => (
          <Owner key={o.fg}>
            <Disc $size={37} $bg={o.bg} $fg={o.fg}>
              <SolidUserIcon size={16} />
            </Disc>
            <Lines $gap={10}>
              <Bar $w={57} />
              <Bar $w={89} $tone={c.barLight} />
            </Lines>
            <OwnerMeta>
              <Disc $size={28} $fg="#123c38">
                <TeamIcon size={14} weight={2.2} />
              </Disc>
              <Disc $size={28} $fg="#1b8a50">
                <BuildingIcon size={14} weight={2.6} />
              </Disc>
              <Tag $w={43} $h={20}>
                <Bar $w={31} $h={8} $tone={c.mid} />
              </Tag>
            </OwnerMeta>
          </Owner>
        ))}
      </Owners>
    </PeopleCard>
    <SourceCard>
      <div>
        <TitleBar $w={67} $h={7} $tone={c.barDark} />
        <SourceList>
          {sources.map(({ icon: Icon, w }, i) => (
            <LegendItem key={i} $gap={9}>
              <Disc $size={26} $bg="#ecedf0" $fg="#45445e">
                <Icon size={15} weight={2.1} />
              </Disc>
              <Bar $w={w} />
            </LegendItem>
          ))}
        </SourceList>
      </div>
      <ChartSide>
        <Donut />
        <ChartKey>
          <LegendItem $gap={10}>
            <Dot $tone="#359d61" />
            <Bar $w={60} />
          </LegendItem>
          <LegendItem $gap={10}>
            <Dot $tone={c.blue} />
            <Bar $w={60} />
          </LegendItem>
          <LegendItem $gap={10}>
            <Dot $tone={c.amber} />
            <Bar $w={48} />
          </LegendItem>
        </ChartKey>
      </ChartSide>
    </SourceCard>
    <Collapse type="button" aria-label="Toggle details">
      <ArrowIcon size={15} weight={4} />
    </Collapse>
  </DetailPanel>
);

export default function App() {
  return (
    <Page>
      <GlobalStyle />
      <Backdrop viewBox="0 0 1672 941" preserveAspectRatio="none" aria-hidden="true">
        <defs>
          <linearGradient id="leftWash" x1="0" y1="0" x2="0" y2="1">
            <stop offset="0" stopColor="#eaf4ee" />
            <stop offset="1" stopColor="#f3f8f5" />
          </linearGradient>
        </defs>
        <path d="M0 214Q60 195 140 205L300 941H0Z" fill="url(#leftWash)" />
        <path d="M1028 941Q1056 910 1094 890Q1350 690 1640 688H1672V941Z" fill="#e9f3ed" />
      </Backdrop>
      <Window>
        <Sidebar />
        <LeftPanel />
        <Centre />
        <RightPanel />
      </Window>
    </Page>
  );
}
